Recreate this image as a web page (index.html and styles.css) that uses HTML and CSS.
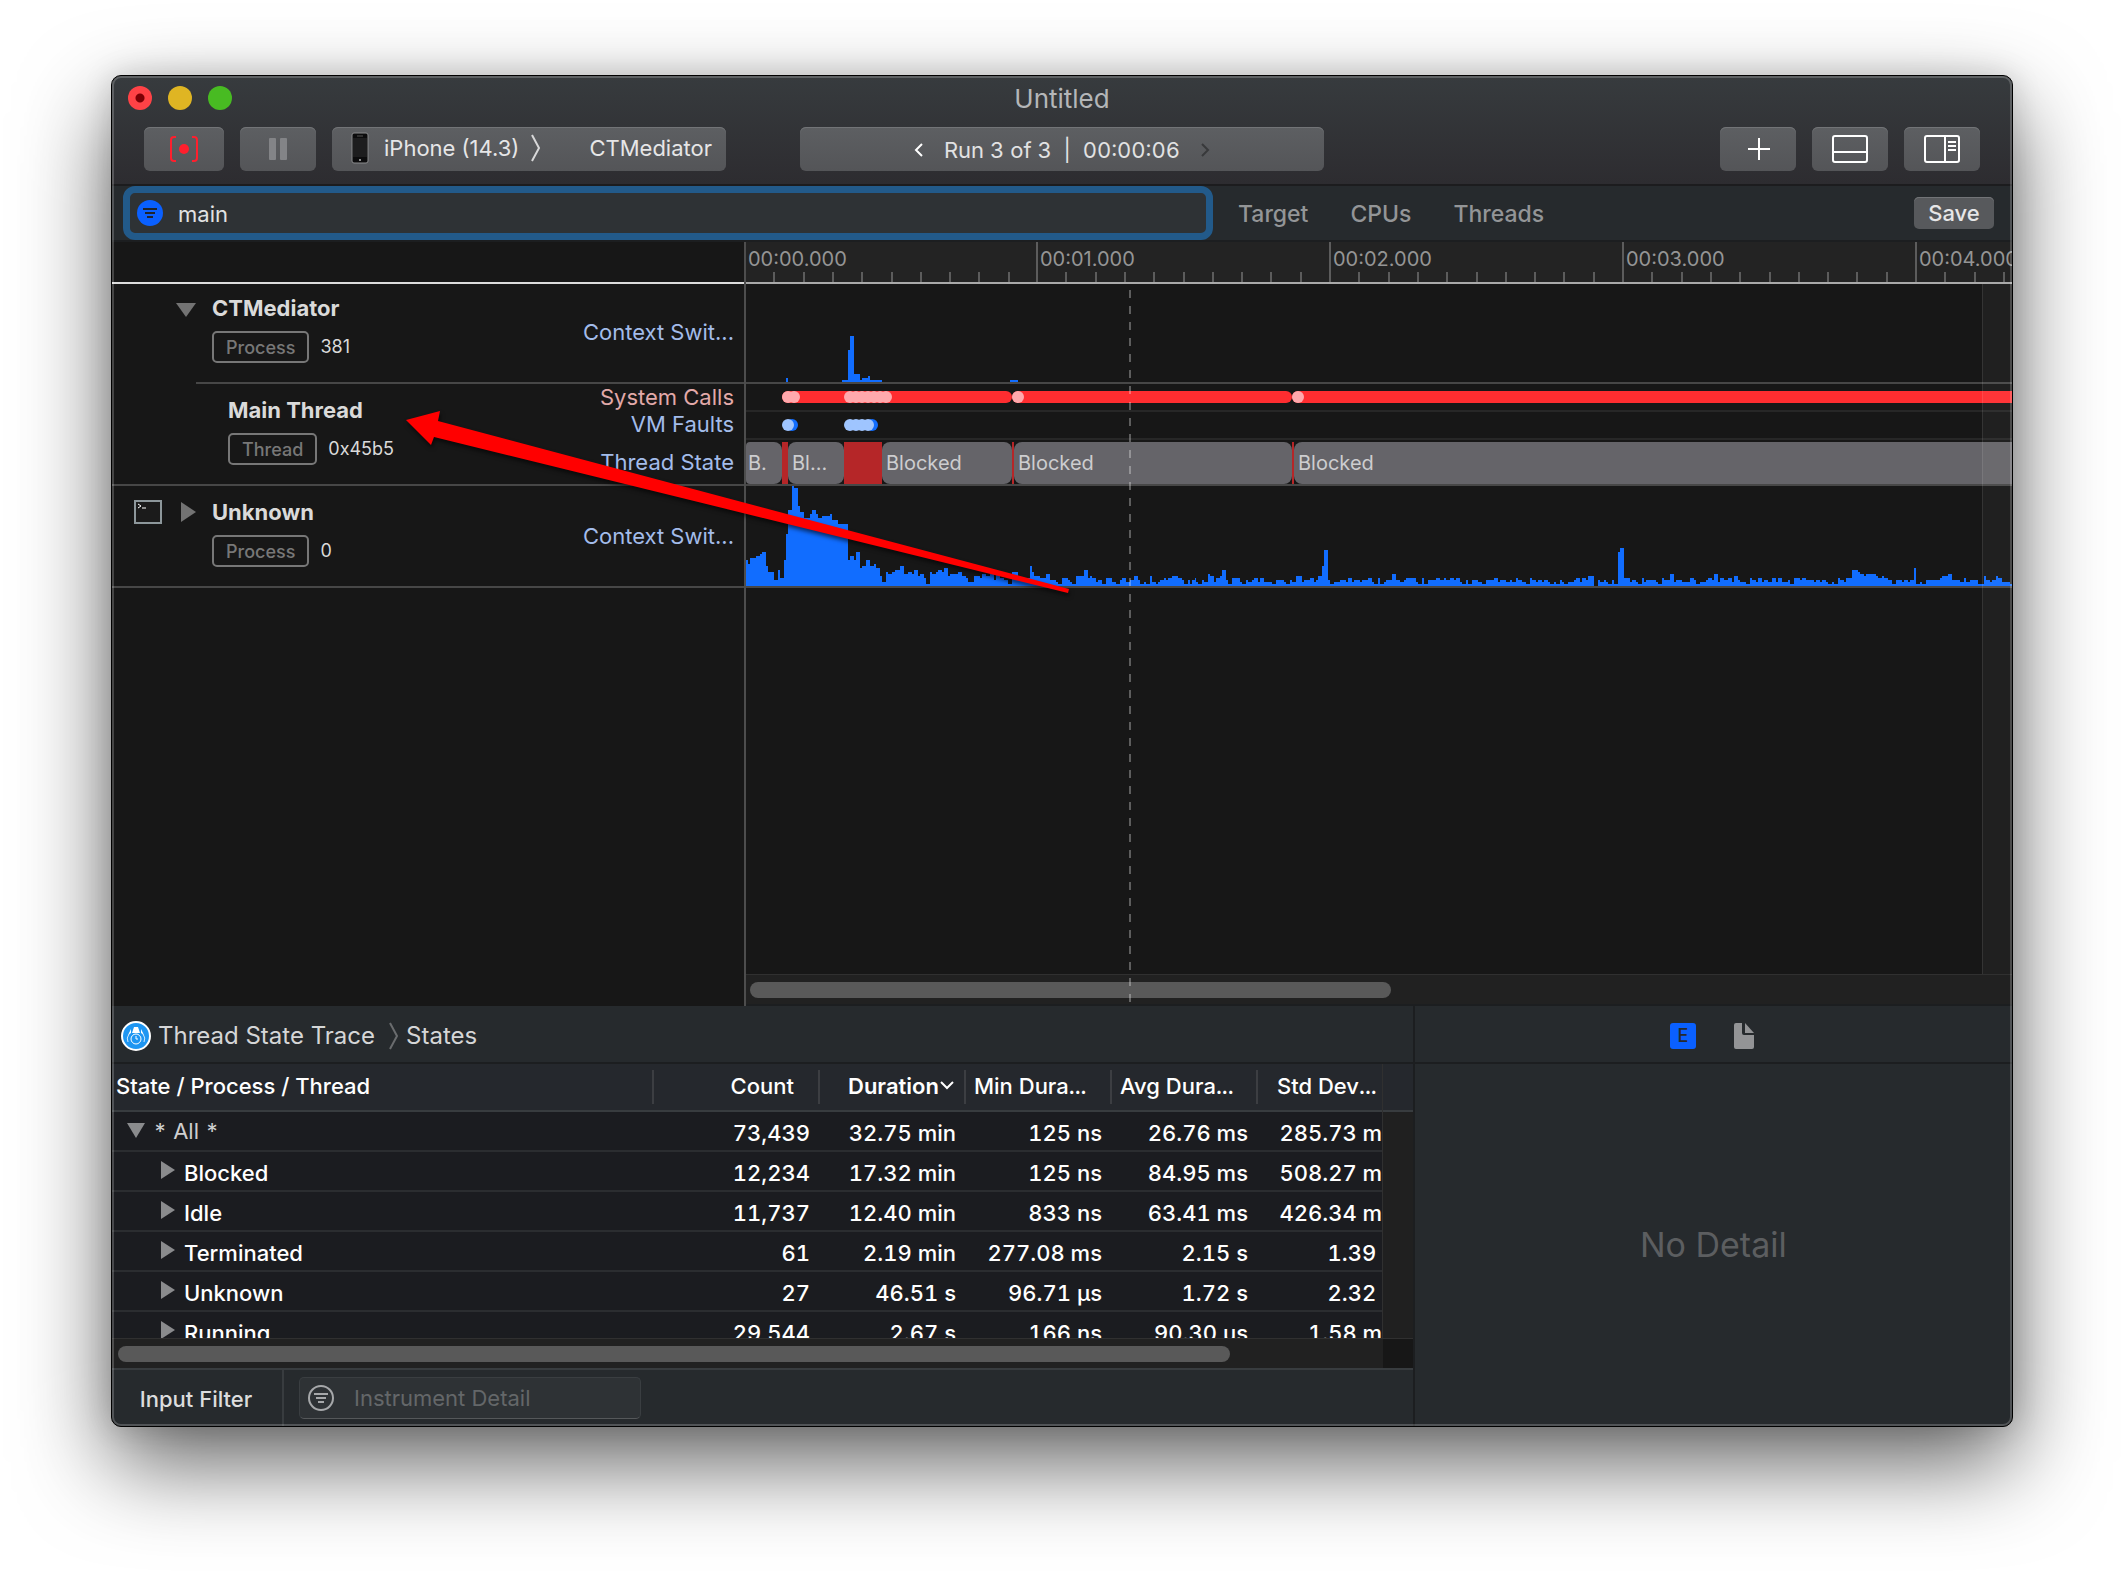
FILE: index.html
```html
<!DOCTYPE html>
<html lang="en">
<head>
<meta charset="utf-8">
<title>Untitled</title>
<link rel="stylesheet" href="styles.css">
</head>
<body>
<main class="window">
  <header class="toolbar">
    <div class="title-row">
      <div class="lights">
        <button class="light light-close" aria-label="Close"></button>
        <button class="light light-min" aria-label="Minimize"></button>
        <button class="light light-max" aria-label="Zoom"></button>
      </div>
      <h1 class="title">Untitled</h1>
    </div>
    <div class="control-row">
      <div class="controls">
        <button class="tool record" aria-label="Record">
          <svg width="32" height="28" viewBox="0 0 32 28" fill="none" stroke="#ff1f2d" stroke-width="2"><path d="M8 2H6Q3 2 3 5V23Q3 26 6 26H8M24 2h2q3 0 3 3v18q0 3-3 3h-2"/><circle cx="16" cy="14" r="5" fill="#ff1f2d" stroke="none"/></svg>
        </button>
        <button class="tool" aria-label="Pause">
          <svg width="18" height="22" viewBox="0 0 18 22" fill="#838487"><rect width="7" height="22" rx="1"/><rect x="11" width="7" height="22" rx="1"/></svg>
        </button>
        <div class="target">
          <button class="target-part">
            <svg width="18" height="32" viewBox="0 0 18 32"><rect x="1" y="1" width="16" height="30" rx="2" fill="#0c0c0d" stroke="#8a8b8d"/><rect x="2" y="6" width="14" height="19" fill="#1d1d1e"/><path d="M6 4h6" stroke="#555"/><circle cx="9" cy="28" r="1" fill="#bbb"/></svg>
            iPhone (14.3)
          </button>
          <svg class="target-arrow" width="10" height="28" viewBox="0 0 10 28" fill="none" stroke="#d8d8d9" stroke-width="2"><path d="M1 1l7 13-7 13"/></svg>
          <button class="target-part">CTMediator</button>
        </div>
      </div>
      <div class="run">
        <button class="step" aria-label="Previous run"><svg width="10" height="14" viewBox="0 0 10 14" fill="none" stroke="#fff" stroke-width="2"><path d="M8 1L2 7l6 6"/></svg></button>
        <span class="run-text">Run 3 of 3 &nbsp;|&nbsp; 00:00:06</span>
        <button class="step" aria-label="Next run"><svg width="10" height="14" viewBox="0 0 10 14" fill="none" stroke="#38393b" stroke-width="2"><path d="M2 1l6 6-6 6"/></svg></button>
      </div>
      <div class="controls controls-end">
        <button class="tool" aria-label="Add instrument"><svg width="24" height="22" viewBox="0 0 24 22" stroke="#fff" stroke-width="2"><path d="M13 0v22M2 11h22"/></svg></button>
        <button class="tool" aria-label="Toggle detail area"><svg width="36" height="28" viewBox="0 0 36 28" fill="none" stroke="#fff" stroke-width="2"><rect x="1" y="1" width="34" height="26" rx="2"/><path d="M1 17h34"/></svg></button>
        <button class="tool" aria-label="Toggle inspector"><svg width="36" height="28" viewBox="0 0 36 28" fill="none" stroke="#fff" stroke-width="2"><rect x="1" y="1" width="34" height="26" rx="2"/><path d="M21 1v26M24 7h8M24 11h8M24 15h8"/></svg></button>
      </div>
    </div>
  </header>

  <div class="filterbar">
    <label class="search">
      <svg width="26" height="26" viewBox="0 0 26 26"><circle cx="13" cy="13" r="13" fill="#0a60ff"/><path d="M6 9h14M8 13h10M10 17h6" stroke="#20242a" stroke-width="2"/></svg>
      <input class="search-input" type="text" value="main" aria-label="Track filter">
    </label>
    <nav class="scopes">
      <button class="scope">Target</button>
      <button class="scope">CPUs</button>
      <button class="scope">Threads</button>
    </nav>
    <button class="save">Save</button>
  </div>

  <section class="tracks">
    <div class="labels">
      <div class="labels-head"></div>
      <div class="label-row">
        <div class="gutter"><svg class="tri" width="20" height="14" viewBox="0 0 20 14" fill="#737373"><path d="M0 0h20L10 14z"/></svg></div>
        <div class="names">
          <h2 class="name">CTMediator</h2>
          <p class="meta"><span class="badge">Process</span>381</p>
        </div>
        <div class="lanes"><span class="lane">Context Swit...</span></div>
      </div>
      <div class="label-row label-sub">
        <div class="gutter"></div>
        <div class="names">
          <h2 class="name">Main Thread</h2>
          <p class="meta"><span class="badge">Thread</span>0x45b5</p>
        </div>
        <div class="lanes lanes-three">
          <span class="lane lane-calls">System Calls</span>
          <span class="lane">VM Faults</span>
          <span class="lane lane-state">Thread State</span>
        </div>
      </div>
      <div class="label-row label-last">
        <div class="gutter">
          <svg class="term" width="28" height="24" viewBox="0 0 28 24" fill="none"><rect x="1" y="1" width="26" height="22" fill="#1b1b1b" stroke="#8d979b" stroke-width="2"/><path d="M4 4l3 2-3 2M8 8h4" stroke="#fff"/></svg>
          <svg class="tri" width="15" height="20" viewBox="0 0 15 20" fill="#737373"><path d="M0 0v20l15-10z"/></svg>
        </div>
        <div class="names">
          <h2 class="name">Unknown</h2>
          <p class="meta"><span class="badge">Process</span>0</p>
        </div>
        <div class="lanes"><span class="lane">Context Swit...</span></div>
      </div>
    </div>

    <div class="timeline">
      <svg class="defs" width="0" height="0"><defs><path id="ticks" d="M28 0v10M58 0v10M87 0v10M116 0v10M146 0v10M175 0v10M204 0v10M233 0v10M263 0v10" stroke="#5c5c5c" stroke-width="2"/></defs></svg>
      <div class="ruler">
        <div class="second"><span>00:00.000</span><svg width="290" height="10"><use href="#ticks"/></svg></div>
        <div class="second"><span>00:01.000</span><svg width="290" height="10"><use href="#ticks"/></svg></div>
        <div class="second"><span>00:02.000</span><svg width="290" height="10"><use href="#ticks"/></svg></div>
        <div class="second"><span>00:03.000</span><svg width="290" height="10"><use href="#ticks"/></svg></div>
        <div class="second"><span>00:04.000</span><svg width="290" height="10"><use href="#ticks"/></svg></div>
      </div>
      <div class="graph graph-short">
        <svg width="1266" height="98" fill="#116dff" shape-rendering="crispEdges"><path d="M40 98v-4h2v4zM96 98v-2h6v-30h2v-14h4v38h6v6h2v-2h6v-2h2v4h12v2zM264 98v-2h8v2z"/></svg>
      </div>
      <div class="graph lane-line">
        <svg width="1266" height="26"><g fill="#ff2d30"><rect x="36" y="7" width="230" height="12" rx="6"/><rect x="266" y="7" width="280" height="12" rx="6"/><rect x="546" y="7" width="740" height="12" rx="6"/></g><g fill="#ffa9ad"><circle cx="42" cy="13" r="6"/><circle cx="48" cy="13" r="6"/><circle cx="104" cy="13" r="6"/><circle cx="110" cy="13" r="6"/><circle cx="116" cy="13" r="6"/><circle cx="122" cy="13" r="6"/><circle cx="128" cy="13" r="6"/><circle cx="134" cy="13" r="6"/><circle cx="140" cy="13" r="6"/><circle cx="272" cy="13" r="6"/><circle cx="552" cy="13" r="6"/></g></svg>
      </div>
      <div class="graph lane-line">
        <svg width="1266" height="26"><g fill="#116dff"><circle cx="46" cy="13" r="6"/><circle cx="126" cy="13" r="6"/></g><g fill="#9fc5ff"><circle cx="42" cy="13" r="6"/><circle cx="104" cy="13" r="6"/><circle cx="110" cy="13" r="6"/><circle cx="116" cy="13" r="6"/><circle cx="122" cy="13" r="6"/></g></svg>
      </div>
      <div class="graph states">
        <span class="state state-first" style="width:36px">B.</span><span class="state busy" style="width:6px"></span><span class="state" style="width:56px">Bl...</span><span class="state busy" style="width:38px"></span><span class="state" style="width:130px">Blocked</span><span class="state busy" style="width:2px"></span><span class="state" style="width:278px">Blocked</span><span class="state busy" style="width:2px"></span><span class="state state-rest">Blocked</span>
      </div>
      <div class="graph graph-tall">
        <svg width="1266" height="100" fill="#116dff" shape-rendering="crispEdges">
          <g transform="translate(-11 -206) scale(.333333)">
            <path d="M33 918V840H39V852H45V834H63V828H75V822H81V816H93V858H99V876H117V900H129V870H135V894H147V840H153V762H159V690H171V618H177V624H189V678H195V696H207V714H225V702H231V690H243V702H249V714H261V708H285V702H291V720H309V732H339V840H345V828H357V840H363V816H375V864H381V858H393V840H405V858H417V852H423V864H435V888H441V906H453V876H459V882H471V876H480V870H495V858H507V882H519V876H531V882H537V870H549V888H555V882H567V894H573V912H585V876H591V882H603V876H609V870H621V876H627V864H639V888H645V882H669V876H681V888H693V894H699V906H717V888H735V894H741V882H753V888H765V882H777V900H783V882H795V894H807V900H819V912H831V876H849V900H861V894H885V858H891V876H897V888H915V894H933V882H945V900H963V906H969V912H981V894H999V900H1005V906H1011V912H1023V888H1047V870H1059V894H1065V888H1071V894H1083V906H1089V900H1101V912H1113V894H1131V906H1143V912H1155V900H1161V894H1173V906H1185V900H1197V888H1209V900H1215V912H1227V906H1233V912H1245V888H1251V906H1263V912H1269V906H1275V900H1287V894H1293V900H1299V894H1311V888H1329V894H1341V900H1347V912H1359V900H1365V912H1371V900H1380V918z"/>
            <path transform="translate(1380 0)" d="M0 918V894H3V906H9V912H21V900H27V906H39V882H45V888H57V906H63V894H75V888H81V870H93V900H99V912H111V894H135V906H141V912H153V900H159V906H171V900H177V894H189V906H195V894H207V906H231V912H243V900H267V906H273V912H285V900H291V906H303V888H321V906H327V900H345V894H357V906H363V900H369V888H381V858H387V810H399V900H405V912H417V906H435V900H453V906H459V894H471V906H477V900H495V906H501V900H519V894H531V906H537V912H549V894H555V912H567V906H573V900H591V882H603V900H615V906H627V900H633V894H663V906H669V912H681V894H687V912H699V900H723V894H735V900H747V894H753V900H765V894H777V900H783V894H795V906H801V912H813V900H819V912H831V900H849V906H861V912H873V900H897V894H909V906H915V900H933V906H945V900H951V906H963V894H969V900H981V906H993V912H1005V894H1011V900H1023V906H1029V900H1041V906H1047V900H1059V906H1065V912H1077V906H1083V912H1095V900H1101V906H1107V912H1119V906H1137V900H1143V894H1155V906H1161V894H1173V900H1179V888H1197V918H1209V900H1215V918z"/>
            <path transform="translate(2595 0)" d="M0 918V906H12V900H18V906H24V912H36V900H42V912H54V816H60V804H72V894H90V906H96V900H108V906H114V912H126V894H132V906H138V900H168V906H174V912H186V894H192V900H210V882H222V906H228V900H246V906H270V894H282V900H288V912H300V906H318V900H324V894H336V900H342V882H354V906H360V894H372V900H384V894H396V906H402V888H414V900H420V906H438V912H450V894H456V900H468V906H474V894H486V906H492V900H504V906H516V894H528V906H534V894H546V906H564V900H570V912H582V894H600V900H606V894H618V900H642V906H648V900H660V906H666V900H678V906H684V912H696V906H702V912H714V894H720V900H732V906H738V894H756V870H774V876H780V882H792V888H798V882H828V888H834V894H846V888H852V894H864V900H876V912H888V900H906V906H912V900H924V906H930V900H942V864H948V912H960V906H966V912H978V900H1020V894H1026V888H1044V882H1056V900H1080V906H1092V894H1098V906H1110V900H1134V912H1152V888H1158V900H1170V906H1176V900H1188V888H1194V894H1206V906H1230V912H1236V918z"/>
          </g>
        </svg>
      </div>
      <div class="empty"></div>
      <div class="hscroll"><div class="thumb thumb-time"></div></div>
      <div class="vscroll"></div>
      <div class="playhead"></div>
    </div>
    <svg class="arrow" width="680" height="200" viewBox="0 0 680 200" fill="#ff0000"><path d="M8 19L42 10 40 20 671 188 670 192 36 36 33 44z"/></svg>
  </section>

  <section class="bottom">
    <div class="detail">
      <nav class="crumbs">
        <svg width="30" height="30" viewBox="0 0 30 30" fill="none"><circle cx="15" cy="15" r="14" fill="#1e96f2" stroke="#fff" stroke-width="2"/><path d="M13 6h4l2 6h-8z" fill="#fff"/><path d="M10 8l-3 6 3-2zM20 8l3 6-3-2z" fill="#fff"/><path d="M8 13q-3 4-1 8M22 13q3 4 1 8" stroke="#cfe8fd"/><circle cx="15" cy="18" r="5" fill="#1e96f2" stroke="#fff"/><path d="M15 15v3h2" stroke="#fff"/></svg>
        <a class="crumb" href="#trace">Thread State Trace</a>
        <svg class="crumb-arrow" width="10" height="28" viewBox="0 0 10 28" fill="none" stroke="#6a6c6e" stroke-width="2"><path d="M1 1l7 13-7 13"/></svg>
        <a class="crumb" href="#states">States</a>
      </nav>
      <div class="table-head-fill">
      <div class="table-view">
        <table class="table">
          <colgroup><col class="col-name"><col class="col-count"><col class="col-time"><col class="col-time"><col class="col-time"><col class="col-time"></colgroup>
          <thead>
            <tr><th class="th-name">State / Process / Thread</th><th class="th-count">Count</th><th class="th-sorted">Duration<svg width="16" height="14" viewBox="0 0 16 14" fill="none" stroke="#fff" stroke-width="2"><path d="M2 2l6 6 6-6"/></svg></th><th>Min Dura...</th><th>Avg Dura...</th><th>Std Dev...</th></tr>
          </thead>
          <tbody>
            <tr><td class="root"><svg width="18" height="16" viewBox="0 0 18 16" fill="#8a8b8d"><path d="M0 0h18L9 15z"/></svg>* All *</td><td>73,439</td><td>32.75 min</td><td>125 ns</td><td>26.76 ms</td><td>285.73 ms</td></tr>
            <tr><td class="child"><svg width="14" height="20" viewBox="0 0 14 20" fill="#8a8b8d"><path d="M0 0v18l14-9z"/></svg>Blocked</td><td>12,234</td><td>17.32 min</td><td>125 ns</td><td>84.95 ms</td><td>508.27 ms</td></tr>
            <tr><td class="child"><svg width="14" height="20" viewBox="0 0 14 20" fill="#8a8b8d"><path d="M0 0v18l14-9z"/></svg>Idle</td><td>11,737</td><td>12.40 min</td><td>833 ns</td><td>63.41 ms</td><td>426.34 ms</td></tr>
            <tr><td class="child"><svg width="14" height="20" viewBox="0 0 14 20" fill="#8a8b8d"><path d="M0 0v18l14-9z"/></svg>Terminated</td><td>61</td><td>2.19 min</td><td>277.08 ms</td><td>2.15 s</td><td>1.39 s</td></tr>
            <tr><td class="child"><svg width="14" height="20" viewBox="0 0 14 20" fill="#8a8b8d"><path d="M0 0v18l14-9z"/></svg>Unknown</td><td>27</td><td>46.51 s</td><td>96.71 µs</td><td>1.72 s</td><td>2.32 s</td></tr>
            <tr><td class="child"><svg width="14" height="20" viewBox="0 0 14 20" fill="#8a8b8d"><path d="M0 0v18l14-9z"/></svg>Running</td><td>29,544</td><td>2.67 s</td><td>166 ns</td><td>90.30 µs</td><td>1.58 ms</td></tr>
          </tbody>
        </table>
      </div>
      </div>
      <div class="table-scroll"><div class="thumb thumb-table"></div></div>
      <footer class="footer">
        <button class="input-filter">Input Filter</button>
        <label class="detail-search">
          <svg width="26" height="26" viewBox="0 0 26 26" fill="none" stroke="#a6a8aa" stroke-width="2"><circle cx="13" cy="13" r="12"/><path d="M6 9h14M8 13h10M10 17h6"/></svg>
          <input class="detail-input" type="text" placeholder="Instrument Detail" aria-label="Instrument detail filter">
        </label>
      </footer>
    </div>
    <aside class="inspector">
      <div class="inspector-tabs">
        <button class="insp-tab insp-e">E</button>
        <button class="insp-tab" aria-label="File"><svg width="20" height="26" viewBox="0 0 20 26" fill="#939496"><path d="M2 0h6v10q0 2 2 2h10v12q0 2-2 2H2q-2 0-2-2V2q0-2 2-2z"/><path d="M11 0l9 10h-9z"/></svg></button>
      </div>
      <p class="no-detail">No Detail</p>
    </aside>
  </section>
</main>
</body>
</html>
```
FILE: styles.css
```css
* { box-sizing: border-box; }
body {
  margin: 0;
  min-height: 100vh;
  padding: 75px 111px 147px;
  display: flex;
  flex-direction: column;
  background: #fff;
  color: #fff;
  font: 22px/26px Inter, "Liberation Sans", sans-serif;
  overflow: hidden;
}
button {
  margin: 0;
  padding: 0;
  border: 0;
  background: none;
  color: inherit;
  font: inherit;
}
input {
  min-width: 0;
  padding: 0;
  border: 0;
  outline: 0;
  background: none;
  color: inherit;
  font: inherit;
}
h1, h2, p { margin: 0; }
svg { display: block; flex: none; }

.window {
  position: relative;
  flex: 1;
  display: flex;
  flex-direction: column;
  border: 1px solid #000;
  border-radius: 10px;
  background: #171717;
  box-shadow: 0 36px 90px rgba(0, 0, 0, .62), 0 0 30px rgba(0, 0, 0, .14);
}
.window::after {
  content: "";
  position: absolute;
  inset: 0;
  border: 2px solid rgba(255, 255, 255, .2);
  border-radius: 9px;
  pointer-events: none;
}

/* Toolbar */
.toolbar {
  height: 110px;
  border-bottom: 2px solid #1c1c1e;
  border-radius: 9px 9px 0 0;
  background: linear-gradient(#373b3e, #2d2c30);
}
.title-row, .control-row {
  display: grid;
  grid-template-columns: 1fr 524px 1fr;
  align-items: center;
}
.title-row { height: 44px; padding: 0 16px; }
.lights { display: flex; gap: 16px; }
.light { width: 24px; height: 24px; border-radius: 50%; }
.light-close { background: radial-gradient(circle, #7d0005 4px, #ff4246 5px); }
.light-min { background: #dfb523; }
.light-max { background: #48bb22; }
.title { padding-top: 2px; color: #b4b6b8; font-size: 26px; font-weight: 400; text-align: center; }
.control-row { padding: 7px 32px 0; }
.controls { display: flex; gap: 16px; }
.controls-end { justify-content: flex-end; }
.tool, .target, .run {
  height: 44px;
  display: flex;
  align-items: center;
  justify-content: center;
  border-radius: 6px;
  background: linear-gradient(#5d5f62, #545558);
  box-shadow: inset 0 1px 0 #727477;
}
.tool { width: 76px; }
.record { width: 80px; }
.target { width: 394px; padding: 0 14px 2px 19px; justify-content: flex-start; color: #e6e6e7; }
.target-part { display: flex; align-items: center; gap: 15px; white-space: nowrap; }
.target-arrow { margin: 0 auto 0 12px; }
.run { gap: 20px; padding-top: 2px; color: #e2e2e3; }
.run-text { font-variant-numeric: tabular-nums; }
.step { width: 10px; }

/* Filter bar */
.filterbar {
  height: 56px;
  display: flex;
  align-items: center;
  border-bottom: 2px solid #1c1e20;
  background: #262a2d;
}
.search {
  width: 1090px;
  height: 54px;
  margin-left: 11px;
  padding: 0 7px;
  display: flex;
  align-items: center;
  gap: 15px;
  border: 7px solid #225a8a;
  border-radius: 12px;
  background: #2e3235;
}
.search-input { flex: 1; padding-top: 2px; color: #e2e3e4; }
.scopes { display: flex; gap: 42px; margin-left: 25px; padding-top: 2px; }
.scope { color: #939597; font-size: 23px; font-weight: 500; }
.save {
  width: 80px;
  height: 32px;
  margin: 0 18px 0 auto;
  border-radius: 5px;
  background: #57595c;
  box-shadow: inset 0 1px 0 #727477;
  color: #e6e6e7;
  font-weight: 500;
}

/* Tracks */
.tracks { position: relative; flex: 1; display: flex; }
.labels { width: 632px; flex: none; }
.labels-head { height: 42px; border-bottom: 2px solid #dcdcdc; }
.label-row { height: 100px; display: flex; }
.label-sub { position: relative; border-bottom: 2px solid #474747; }
.label-sub::before {
  content: "";
  position: absolute;
  top: -2px;
  left: 84px;
  right: 0;
  border-top: 2px solid #474747;
}
.label-sub { height: 102px; }
.label-last { height: 102px; border-bottom: 2px solid #474747; }
.gutter { width: 84px; padding-left: 22px; flex: none; display: flex; align-items: flex-start; }
.gutter .tri { margin: 19px 0 0 auto; }
.label-last .tri { margin-top: 16px; }
.term { margin-top: 14px; }
.names { padding: 11px 0 0 16px; }
.label-sub .names { padding: 13px 0 0 32px; }
.label-last .names { padding-top: 13px; }
.name { color: #dadada; font-size: 22px; font-weight: 700; }
.meta { margin-top: 10px; display: flex; align-items: center; gap: 11px; color: #dadada; font-size: 18px; }
.badge {
  height: 32px;
  padding: 0 12px;
  border: 2px solid #777;
  border-radius: 5px;
  color: #777;
  font-weight: 500;
  line-height: 29px;
}
.lanes { margin-left: auto; padding: 35px 10px 0 0; text-align: right; color: #a3bcea; }
.label-last .lanes { padding-top: 37px; }
.lanes-three { padding-top: 0; }
.lane { display: block; }
.lanes-three .lane { line-height: 28px; }
.lanes-three .lane-calls { color: #e2a9a9; line-height: 26px; }
.lanes-three .lane-state { line-height: 48px; }

.timeline {
  position: relative;
  flex: 1;
  min-width: 0;
  display: flex;
  flex-direction: column;
  border-left: 2px solid #4d4d4d;
  overflow: hidden;
}
.defs { position: absolute; }
.ruler { height: 42px; display: flex; overflow: hidden; border-bottom: 2px solid #a9a9a9; background: #232323; }
.second {
  width: 293px;
  flex: none;
  display: flex;
  flex-direction: column;
  justify-content: space-between;
  border-left: 2px solid #5c5c5c;
  color: #959595;
  font-size: 20px;
}
.second span { padding: 4px 0 0 2px; }
.second:first-child { width: 290px; border-left: 0; }
.graph { overflow: hidden; border-bottom: 2px solid #474747; }
.lane-line { height: 28px; border-color: #272727; }
.states { height: 46px; padding-top: 2px; display: flex; }
.state {
  flex: none;
  padding-left: 4px;
  border-radius: 8px;
  background: #656469;
  color: #cdcdcf;
  font-size: 20px;
  line-height: 42px;
  overflow: hidden;
}
.state-first { padding-left: 2px; border-radius: 4px 8px 8px 4px; }
.busy { padding: 0; border-radius: 0; background: #b52628; }
.state-rest { flex: 1; border-radius: 8px 0 0 8px; }
.empty { flex: 1; }
.hscroll { height: 32px; padding: 7px 4px 0; border-top: 1px solid #303030; border-bottom: 2px solid #1c1e20; background: #212121; }
.thumb { height: 16px; border-radius: 8px; background: #595959; }
.thumb-time { width: 641px; }
.vscroll {
  position: absolute;
  top: 42px;
  right: 0;
  bottom: 32px;
  width: 30px;
  border-left: 1px solid rgba(255, 255, 255, .09);
  background: rgba(255, 255, 255, .04);
}
.playhead {
  position: absolute;
  top: 48px;
  bottom: 2px;
  left: 383px;
  width: 2px;
  background: repeating-linear-gradient(rgba(255, 255, 255, .3) 0 8px, transparent 8px 16px);
}
.arrow { position: absolute; top: 159px; left: 286px; filter: drop-shadow(1px 3px 2px rgba(0, 0, 0, .6)); }

/* Detail area */
.bottom { display: flex; background: #262a2d; border-radius: 0 0 9px 9px; }
.detail { flex: 1302 1 0; min-width: 0; }
.crumbs { height: 58px; padding: 3px 0 0 9px; display: flex; align-items: center; border-bottom: 2px solid #1c1e20; }
.crumb { margin-left: 7px; color: #d5d6d7; font-size: 24px; text-decoration: none; }
.crumb-arrow { margin-left: 14px; }
.table-head-fill { height: 274px; padding-right: 30px; background: linear-gradient(#25282d 46px, #383c3f 46px 48px, #202020 48px); }
.table-view { height: 274px; overflow: hidden; border-right: 1px solid #303030; background: #1b1c20; }
.table { width: 1292px; table-layout: fixed; border-collapse: separate; border-spacing: 0; font-variant-numeric: tabular-nums; }
.col-name { width: 542px; }
.col-count { width: 166px; }
.col-time { width: 146px; }
th {
  height: 48px;
  padding: 0 0 2px 8px;
  border-bottom: 2px solid #383c3f;
  background: linear-gradient(#3c3e42, #3c3e42) right 6px / 2px 34px no-repeat #25282d;
  font-weight: 500;
  text-align: left;
  white-space: nowrap;
}
.th-name { padding-left: 4px; }
.th-count { padding-right: 26px; text-align: right; }
.th-sorted { padding-left: 28px; font-weight: 600; }
.th-sorted svg { display: inline-block; }
th:last-child { padding-left: 19px; }
td {
  height: 40px;
  padding: 4px 10px 0 0;
  border-bottom: 2px solid #2b2d30;
  font-weight: 500;
  line-height: 34px;
  text-align: right;
  white-space: nowrap;
}
td:first-child { text-align: left; }
td svg { display: inline-block; vertical-align: 0; }
.root { padding: 0 0 0 15px; color: #cfcfd0; font-weight: 400; }
.root svg { margin-right: 8px; }
.child { padding-left: 49px; }
.child svg { margin-right: 9px; }
.table-scroll {
  height: 32px;
  padding: 7px 6px 0;
  border-top: 1px solid #303030;
  border-bottom: 2px solid #383c3f;
  background: linear-gradient(#171717, #171717) right / 30px 100% no-repeat #212121;
}
.thumb-table { width: 1112px; }
.footer { height: 56px; display: flex; align-items: center; }
.input-filter { width: 172px; height: 56px; padding: 2px 2px 0 0; border-right: 2px solid #383c3f; color: #dcddde; font-weight: 500; }
.detail-search {
  width: 342px;
  height: 42px;
  margin-left: 15px;
  padding-left: 8px;
  display: flex;
  align-items: center;
  gap: 20px;
  border: 1px solid #3a3e41;
  border-bottom-color: #55585a;
  border-radius: 5px;
  background: #2e3235;
}
.detail-input { flex: 1; }
.detail-input::placeholder { color: #646769; opacity: 1; }

.inspector { flex: 598 1 0; display: flex; flex-direction: column; border-left: 2px solid #1c1e20; }
.inspector-tabs { height: 58px; padding: 3px 3px 0 0; display: flex; align-items: center; justify-content: center; gap: 38px; border-bottom: 2px solid #1c1e20; }
.insp-e { width: 26px; height: 26px; border-radius: 3px; background: #0a60ff; color: #262a2d; font-size: 18px; font-weight: 500; line-height: 26px; }
.no-detail { margin: auto; color: #5c5e60; font-size: 34px; line-height: 42px; }
```
